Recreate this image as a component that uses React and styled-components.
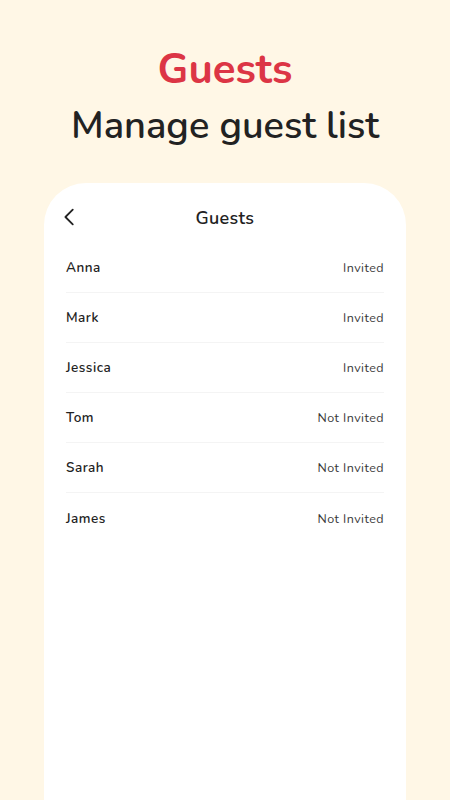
import styled, { createGlobalStyle } from "styled-components";

const GlobalStyle = createGlobalStyle`
  html, body {
    margin: 0;
    padding: 0;
    background: #fff7e6;
    font-family: "Nunito", "Open Sans", sans-serif;
    overflow: hidden;
  }
`;

const Page = styled.div`
  width: 450px;
  height: 800px;
  display: flex;
  flex-direction: column;
  align-items: center;
  background: #fff7e6;
  overflow: hidden;
`;

const Heading = styled.div`
  display: flex;
  flex-direction: column;
  align-items: center;
  padding-top: 44px;
`;

const Title = styled.h1`
  margin: 0;
  font-size: 42px;
  line-height: 52px;
  font-weight: 700;
  color: #dc3545;
`;

const Subtitle = styled.h2`
  margin: 4px 0 0;
  font-size: 38px;
  line-height: 52px;
  font-weight: 600;
  color: #222;
`;

const Card = styled.div`
  margin-top: 31px;
  width: 362px;
  flex: 1;
  background: #fff;
  border-radius: 42px 42px 0 0;
  padding: 0 22px;
  box-sizing: border-box;
`;

const Header = styled.div`
  position: relative;
  display: flex;
  align-items: center;
  justify-content: center;
  height: 24px;
  padding: 23px 0 13px;
`;

const Back = styled.button`
  position: absolute;
  left: -8px;
  top: 22px;
  width: 24px;
  height: 24px;
  padding: 0;
  border: none;
  background: none;
  color: #222;
  display: flex;
  align-items: center;
  justify-content: center;
`;

const HeaderTitle = styled.div`
  font-size: 18px;
  font-weight: 600;
  color: #222;
  letter-spacing: 0.3px;
`;

const List = styled.ul`
  margin: 0;
  padding: 0;
  list-style: none;
`;

const Row = styled.li`
  display: flex;
  align-items: center;
  justify-content: space-between;
  height: 50px;
  border-bottom: ${p => (p.$last ? "none" : "1px solid #f4f4f4")};
  box-sizing: border-box;
`;

const Name = styled.span`
  font-size: 13.5px;
  font-weight: 600;
  color: #222;
  letter-spacing: 0.5px;
`;

const Status = styled.span`
  font-size: 12.5px;
  color: #3a3a3a;
  letter-spacing: 0.45px;
`;

const guests = [
  { name: "Anna", status: "Invited" },
  { name: "Mark", status: "Invited" },
  { name: "Jessica", status: "Invited" },
  { name: "Tom", status: "Not Invited" },
  { name: "Sarah", status: "Not Invited" },
  { name: "James", status: "Not Invited" },
];

export default function App() {
  return (
    <Page>
      <GlobalStyle />
      <Heading>
        <Title>Guests</Title>
        <Subtitle>Manage guest list</Subtitle>
      </Heading>
      <Card>
        <Header>
          <Back aria-label="Back">
            <svg width="22" height="22" viewBox="0 0 24 24" fill="none" stroke="currentColor" strokeWidth="2" strokeLinecap="round" strokeLinejoin="round">
              <path d="M15 4l-8 8 8 8" />
            </svg>
          </Back>
          <HeaderTitle>Guests</HeaderTitle>
        </Header>
        <List>
          {guests.map((g, i) => (
            <Row key={g.name} $last={i === guests.length - 1}>
              <Name>{g.name}</Name>
              <Status>{g.status}</Status>
            </Row>
          ))}
        </List>
      </Card>
    </Page>
  );
}
